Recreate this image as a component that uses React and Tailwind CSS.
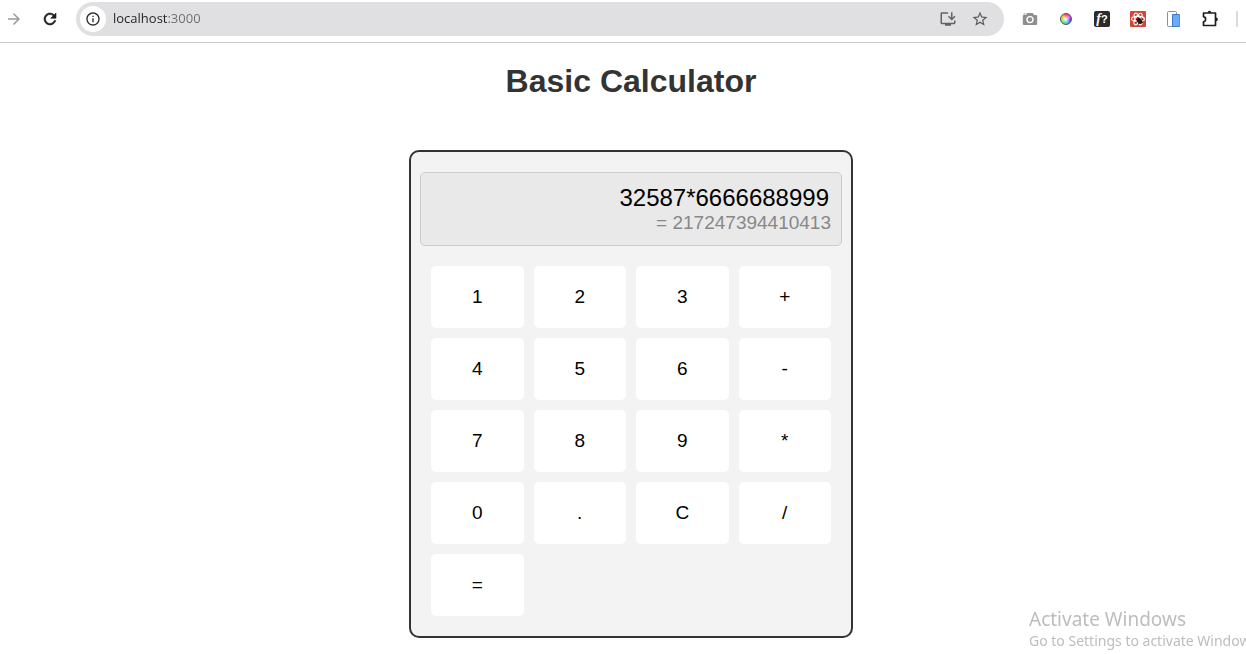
import React, { useState } from "react";
import {
  MdArrowForward,
  MdInfoOutline,
  MdStarBorder,
  MdOutlineInstallDesktop,
} from "react-icons/md";

const KEYS = ["1", "2", "3", "+", "4", "5", "6", "-", "7", "8", "9", "*", "0", ".", "C", "/", "="];

function ReloadIcon() {
  return (
    <svg width="18" height="18" viewBox="0 0 24 24" aria-hidden="true">
      <path
        fill="currentColor"
        stroke="currentColor"
        strokeWidth="0.8"
        d="M17.650 6.350A7.958 7.958 0 0 0 12 4c-4.420 0-7.990 3.580-7.990 8s3.570 8 7.990 8c3.730 0 6.840-2.550 7.730-6h-2.080A5.990 5.990 0 0 1 12 18c-3.310 0-6-2.690-6-6s2.690-6 6-6c1.660 0 3.140.69 4.220 1.780L13 11h7V4z"
      />
    </svg>
  );
}

function CameraIcon() {
  return (
    <svg width="16" height="16" viewBox="0 0 16 16" aria-hidden="true">
      <path fill="#8e8e8e" d="M5.200 2h5.600l1.200 2h2a1.200 1.200 0 0 1 1.200 1.200v7.600A1.200 1.200 0 0 1 14 14H2a1.200 1.200 0 0 1-1.200-1.200V5.200A1.200 1.200 0 0 1 2 4h2zM1.500 2.400h2v1h-2z" />
      <circle cx="8" cy="8.600" r="3.700" fill="#fff" />
      <circle cx="8" cy="8.600" r="2.300" fill="#8e8e8e" />
    </svg>
  );
}

function ColorWheelIcon() {
  return (
    <span className="block size-3 rounded-full border border-[#555] bg-[radial-gradient(circle,#fff_0%,transparent_65%),conic-gradient(#f33,#f3c,#63f,#3af,#3e8,#8e3,#fb3,#f33)]" />
  );
}

function FontIcon() {
  return (
    <svg width="16" height="16" viewBox="0 0 16 16" aria-hidden="true">
      <rect width="16" height="16" rx="2" fill="#2b2b2b" />
      <text x="8" y="12" textAnchor="middle" fill="#fff" fontSize="14" fontWeight="bold" fontStyle="italic" fontFamily="Liberation Serif, serif">
        f<tspan fontSize="11" fontStyle="normal" fontFamily="Liberation Sans, sans-serif">?</tspan>
      </text>
    </svg>
  );
}

function ReactBugIcon() {
  return (
    <svg width="16" height="16" viewBox="0 0 16 16" aria-hidden="true">
      <rect width="16" height="16" rx="1" fill="#d2453b" />
      <g fill="none" stroke="#fff" strokeWidth="1.100">
        <ellipse cx="8" cy="8" rx="6.500" ry="2.600" />
        <ellipse cx="8" cy="8" rx="6.500" ry="2.600" transform="rotate(60 8 8)" />
        <ellipse cx="8" cy="8" rx="6.500" ry="2.600" transform="rotate(120 8 8)" />
      </g>
      <ellipse cx="9.500" cy="9.800" rx="2.200" ry="3.400" fill="#2a1514" transform="rotate(-40 9.500 9.800)" />
      <path stroke="#2a1514" strokeWidth="0.900" d="M5.500 8l7.500 3.500M8 13.500l3.500-7M5.500 11.500l7-3" />
    </svg>
  );
}

function DevicesIcon() {
  return (
    <svg width="16" height="16" viewBox="0 0 16 16" aria-hidden="true">
      <rect x="1.500" y=".5" width="9" height="15" rx="1" fill="#fff" stroke="#8a9097" />
      <rect x="6" y="3" width="8" height="13" rx="1" fill="#3f78cc" />
      <rect x="7" y="4" width="6.500" height="11" fill="#6caaf7" />
    </svg>
  );
}

function PuzzleIcon() {
  return (
    <svg width="18" height="18" viewBox="0 0 18 18" className="shrink-0" aria-hidden="true">
      <path fill="none" stroke="#1f1f1f" strokeWidth="1.700" strokeLinejoin="round" d="M2.500 3h12v12.500h-12v-3.700a2.600 2.600 0 0 0 0-5.100z" />
      <path fill="#1f1f1f" d="M6.600 2.700a1.900 1.900 0 0 1 3.800 0zM15 7.400a1.900 1.900 0 0 1 0 3.800z" />
    </svg>
  );
}

const EXTENSIONS = [
  ["Screen capture", CameraIcon],
  ["Color picker", ColorWheelIcon],
  ["Font finder", FontIcon],
  ["React tools", ReactBugIcon],
  ["Device preview", DevicesIcon],
  ["Extensions", PuzzleIcon],
];

function BrowserBar() {
  return (
    <header className="flex items-start border-b border-[#c9c9c9] pt-0.5 pb-1.5">
      <div className="flex h-[34px] items-center gap-[18px] pr-[17px] pl-[5px]">
        <button aria-label="Forward" className="text-[#9a9a9a]"><MdArrowForward size={18} /></button>
        <button aria-label="Reload" className="text-[#1f1f1f]"><ReloadIcon /></button>
      </div>
      <div className="flex h-[34px] flex-1 items-center rounded-full bg-[#e0e0e2] pr-[15px] pl-1">
        <button aria-label="Site information" className="flex size-[26px] items-center justify-center rounded-full bg-white text-[#2b2b2b]">
          <MdInfoOutline size={16} />
        </button>
        <input
          aria-label="Address"
          defaultValue="localhost:3000"
          className="ml-[7px] min-w-0 flex-1 bg-[linear-gradient(to_right,#202124_54px,#6a6c70_54px)] bg-clip-text font-['Open_Sans',sans-serif] text-[13px] text-transparent outline-none"
        />
        <button aria-label="Install app" className="text-[#5f6368]"><MdOutlineInstallDesktop size={18} /></button>
        <button aria-label="Bookmark" className="ml-3.5 text-[#5a5c60]"><MdStarBorder size={18} /></button>
      </div>
      <div className="flex h-[34px] items-center gap-4 pr-2 pl-4">
        {EXTENSIONS.map(([label, Icon]) => (
          <button key={label} aria-label={label} className="flex size-5 items-center justify-center">
            <Icon />
          </button>
        ))}
        <span className="h-4 w-0.5 bg-[#dcdcdc]" />
      </div>
    </header>
  );
}

export default function App() {
  const [expression, setExpression] = useState("32587*6666688999");
  const [result, setResult] = useState("217247394410413");

  function press(key) {
    if (key === "C") {
      setExpression("");
      setResult("");
    } else if (key === "=") {
      setExpression(result);
    } else {
      const next = expression + key;
      setExpression(next);
      if (/\d$/.test(next)) {
        try {
          setResult(String(Function(`return ${next}`)()));
        } catch {
          setResult("");
        }
      }
    }
  }

  return (
    <div className="min-h-screen overflow-x-clip bg-white font-['Liberation_Sans',Arial,sans-serif]">
      <BrowserBar />
      <main className="flex flex-col items-center pb-4 pl-4">
        <h1 className="mt-5 text-[32px] leading-9 font-bold text-[#333]">Basic Calculator</h1>
        <section className="mt-[51px] w-full max-w-[444px] rounded-[10px] border-2 border-[#333] bg-[#f3f3f3] px-[9px] py-5">
          <div className="flex flex-col rounded-[5px] border border-[#ccc] bg-[#e9e9e9] px-2.5 py-3 text-right">
            <input
              aria-label="Expression"
              readOnly
              value={expression}
              className="h-[26px] w-full bg-transparent pr-0.5 text-right text-[24px] leading-[26px] text-black outline-none"
            />
            <output className="h-[22px] text-[19px] leading-6 text-[#888]">= {result}</output>
          </div>
          <div className="mt-5 grid grid-cols-4 gap-2.5 px-[11px]">
            {KEYS.map((key) => (
              <button
                key={key}
                onClick={() => press(key)}
                className="h-[62px] rounded-[5px] bg-white text-[19px] text-black"
              >
                {key}
              </button>
            ))}
          </div>
        </section>
      </main>
      <aside className="fixed right-0 bottom-0 w-[217px] overflow-hidden pb-[3px] font-['Noto_Sans',sans-serif] whitespace-nowrap text-[#bdbdbd]">
        <p className="text-[19px] leading-6">Activate Windows</p>
        <p className="text-[14px] leading-5">Go to Settings to activate Windows</p>
      </aside>
    </div>
  );
}
